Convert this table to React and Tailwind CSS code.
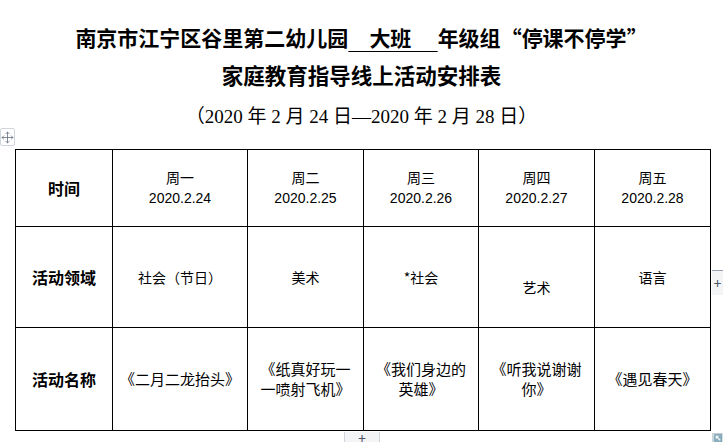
import { Move } from "lucide-react";

// Word-style weekly schedule table for the kindergarten's online activities.
const days = [
  { name: "周一", date: "2020.2.24", area: "社会（节日）", title: ["《二月二龙抬头》"] },
  { name: "周二", date: "2020.2.25", area: "美术", title: ["《纸真好玩一", "一喷射飞机》"] },
  { name: "周三", date: "2020.2.26", area: "*社会", title: ["《我们身边的", "英雄》"] },
  { name: "周四", date: "2020.2.27", area: "艺术", low: true, title: ["《听我说谢谢", "你》"] },
  { name: "周五", date: "2020.2.28", area: "语言", title: ["《遇见春天》"] },
];

const cjk = "font-['Liberation_Serif','Noto_Sans_CJK_SC',serif]";
const cell = "border border-black text-center align-middle p-0";

export default function App() {
  return (
    <div className="relative w-[723px] h-[442px] overflow-hidden bg-white text-black">
      <div className={`pt-[17px] text-center ${cjk}`}>
        <div className="h-[40px] leading-[40px] text-[21px] font-bold">
          南京市江宁区谷里第二幼儿园
          <span className="underline underline-offset-[5px] decoration-[1px] whitespace-pre">{"    大班     "}</span>
          年级组<span className="font-['Noto_Sans_CJK_SC',sans-serif]">“</span>停课不停学
          <span className="font-['Noto_Sans_CJK_SC',sans-serif]">”</span>
        </div>
        <div className="h-[40px] leading-[40px] text-[21.5px] font-bold">家庭教育指导线上活动安排表</div>
        <div className="h-[40px] leading-[40px] text-[19px]">（2020 年 2 月 24 日—2020 年 2 月 28 日）</div>
      </div>

      <table className="ml-[15px] mt-[12px] w-[695px] table-fixed border-collapse font-['Noto_Sans_CJK_SC',sans-serif]">
        <colgroup>
          <col className="w-[97px]" />
          <col className="w-[135px]" />
          <col className="w-[116px]" />
          <col className="w-[115px]" />
          <col className="w-[116px]" />
          <col className="w-[116px]" />
        </colgroup>
        <tbody>
          <tr className="h-[77px]">
            <td className={`${cell} text-[16px] font-bold`}>时间</td>
            {days.map((d) => (
              <td key={d.name} className={cell}>
                <div className="text-[14px] leading-[21px]">{d.name}</div>
                <div className="text-[14px] leading-[21px] font-['Liberation_Sans',sans-serif]">{d.date}</div>
              </td>
            ))}
          </tr>
          <tr className="h-[101px]">
            <td className={`${cell} text-[16px] font-bold`}>活动领域</td>
            {days.map((d) => (
              <td key={d.name} className={`${cell} text-[14px]`}>
                <div className={d.low ? "pt-[20px]" : ""}>{d.area}</div>
              </td>
            ))}
          </tr>
          <tr className="h-[103px]">
            <td className={`${cell} text-[16px] font-bold`}>活动名称</td>
            {days.map((d) => (
              <td key={d.name} className={`${cell} text-[15px] leading-[20px]`}>
                {d.title.map((t) => (
                  <div key={t}>{t}</div>
                ))}
              </td>
            ))}
          </tr>
        </tbody>
      </table>

      {/* table move handle */}
      <div className="absolute left-0 top-[128px] flex h-[18px] w-[15px] items-center justify-center rounded-[2px] border border-gray-300 bg-white text-gray-500">
        <Move size={13} strokeWidth={1.5} />
      </div>

      {/* add-row tab */}
      <div className="absolute left-[344px] top-[432px] flex h-[10px] w-[36px] items-start justify-center overflow-hidden border-x border-gray-300 bg-gray-100 text-[14px] leading-[14px] text-gray-600">
        +
      </div>

      {/* add-column tab */}
      <div className="absolute left-[712px] top-[270px] flex h-[25px] w-[11px] items-center justify-center border-t border-gray-400 bg-gray-100 text-[14px] text-gray-600">
        +
      </div>

      {/* resize corner */}
      <div className="absolute left-[712px] top-[433px] h-[9px] w-[11px] border-l border-t border-gray-300 text-[8px] leading-[8px] text-gray-500">
        ↖
      </div>
    </div>
  );
}
